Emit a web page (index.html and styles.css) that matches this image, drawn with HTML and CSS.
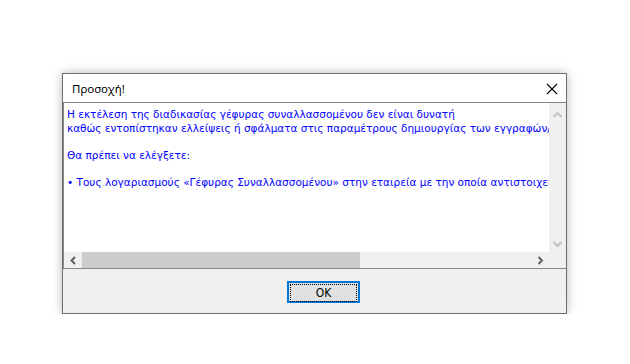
FILE: index.html
```html
<!DOCTYPE html>
<html lang="el">
<head>
    <meta charset="UTF-8">
    <title>Προσοχή!</title>
    <link rel="stylesheet" href="styles.css">
</head>
<body>

    <div class="dialog">
        <div class="titlebar">
            <span class="title">Προσοχή!</span>
            <svg class="close" width="12" height="12" viewBox="0 0 12 12">
                <path d="M1 1 L11 11 M11 1 L1 11" stroke="#000" stroke-width="1.1" fill="none"/>
            </svg>
        </div>

        <div class="textbox">
            <div class="textrow">
                <div class="message">
                    <div>Η εκτέλεση της διαδικασίας γέφυρας συναλλασσομένου δεν είναι δυνατή</div>
                    <div>καθώς εντοπίστηκαν ελλείψεις ή σφάλματα στις παραμέτρους δημιουργίας των εγγραφών/κινήσεων.</div>
                    <div>&nbsp;</div>
                    <div>Θα πρέπει να ελέγξετε:</div>
                    <div>&nbsp;</div>
                    <div>• Τους λογαριασμούς «Γέφυρας Συναλλασσομένου» στην εταιρεία με την οποία αντιστοιχεί ο συναλλασσόμενος.</div>
                </div>
                <div class="vscroll">
                    <svg width="17" height="20" viewBox="0 0 17 20">
                        <path d="M4.5 14 L8.5 10 L12.5 14" stroke="#c2c2c2" stroke-width="2" fill="none"/>
                    </svg>
                    <svg width="17" height="17" viewBox="0 0 17 17">
                        <path d="M4.5 7 L8.5 11 L12.5 7" stroke="#c2c2c2" stroke-width="2" fill="none"/>
                    </svg>
                </div>
            </div>
            <div class="hscroll">
                <svg class="arrow" width="18" height="15" viewBox="0 0 18 15">
                    <path d="M11 4 L7.5 7.5 L11 11" stroke="#606060" stroke-width="2" fill="none"/>
                </svg>
                <div class="track">
                    <div class="thumb"></div>
                </div>
                <svg class="arrow" width="17" height="15" viewBox="0 0 17 15">
                    <path d="M6.5 4 L10 7.5 L6.5 11" stroke="#606060" stroke-width="2" fill="none"/>
                </svg>
                <div class="corner"></div>
            </div>
        </div>

        <div class="footer">
            <button class="ok"><span>OK</span></button>
        </div>
    </div>

</body>
</html>
```

FILE: styles.css
```css
body {
    margin: 0;
    padding: 73px 0 0 62px;
    background-color: #fff;
}
.dialog {
    width: 503px;
    border: 1px solid #6f6f6f;
    box-shadow: 0 0 10px rgba(0, 0, 0, 0.28);
    background-color: #f0f0f0;
}
.titlebar {
    height: 28px;
    background-color: #fff;
    display: flex;
    align-items: center;
    justify-content: space-between;
    padding: 0 8px 0 9px;
}
.title {
    font-family: "Noto Sans", sans-serif;
    font-size: 11.5px;
    color: #000;
}
.close {
    margin-top: 1px;
}
.textbox {
    border-top: 1px solid #828790;
    border-bottom: 1px solid #828790;
    border-left: 1px solid #828790;
    background-color: #fff;
}
.textrow {
    display: flex;
    height: 149px;
}
.message {
    flex: 1;
    overflow: hidden;
    white-space: nowrap;
    padding: 5px 0 0 3px;
    font-family: "DejaVu Sans", sans-serif;
    font-size: 10.5px;
    line-height: 13.5px;
    color: #0000ff;
}
.vscroll {
    width: 17px;
    background-color: #f0f0f0;
    display: flex;
    flex-direction: column;
    justify-content: space-between;
}
.hscroll {
    display: flex;
    height: 16px;
    background-color: #f0f0f0;
    align-items: stretch;
}
.arrow {
    flex: none;
    align-self: center;
}
.track {
    flex: 1;
}
.thumb {
    width: 278px;
    height: 100%;
    background-color: #cdcdcd;
}
.corner {
    width: 17px;
    background-color: #f0f0f0;
}
.footer {
    height: 44px;
    padding: 12px 0 0 224px;
    box-sizing: border-box;
}
.ok {
    width: 73px;
    height: 22px;
    padding: 1px;
    border: 2px solid #0078d7;
    background-color: #e1e1e1;
    font-family: "DejaVu Sans Condensed", "DejaVu Sans", sans-serif;
    font-size: 12px;
    color: #000;
}
.ok span {
    display: flex;
    align-items: center;
    justify-content: center;
    height: 100%;
    border: 1px dotted #000;
}
```
